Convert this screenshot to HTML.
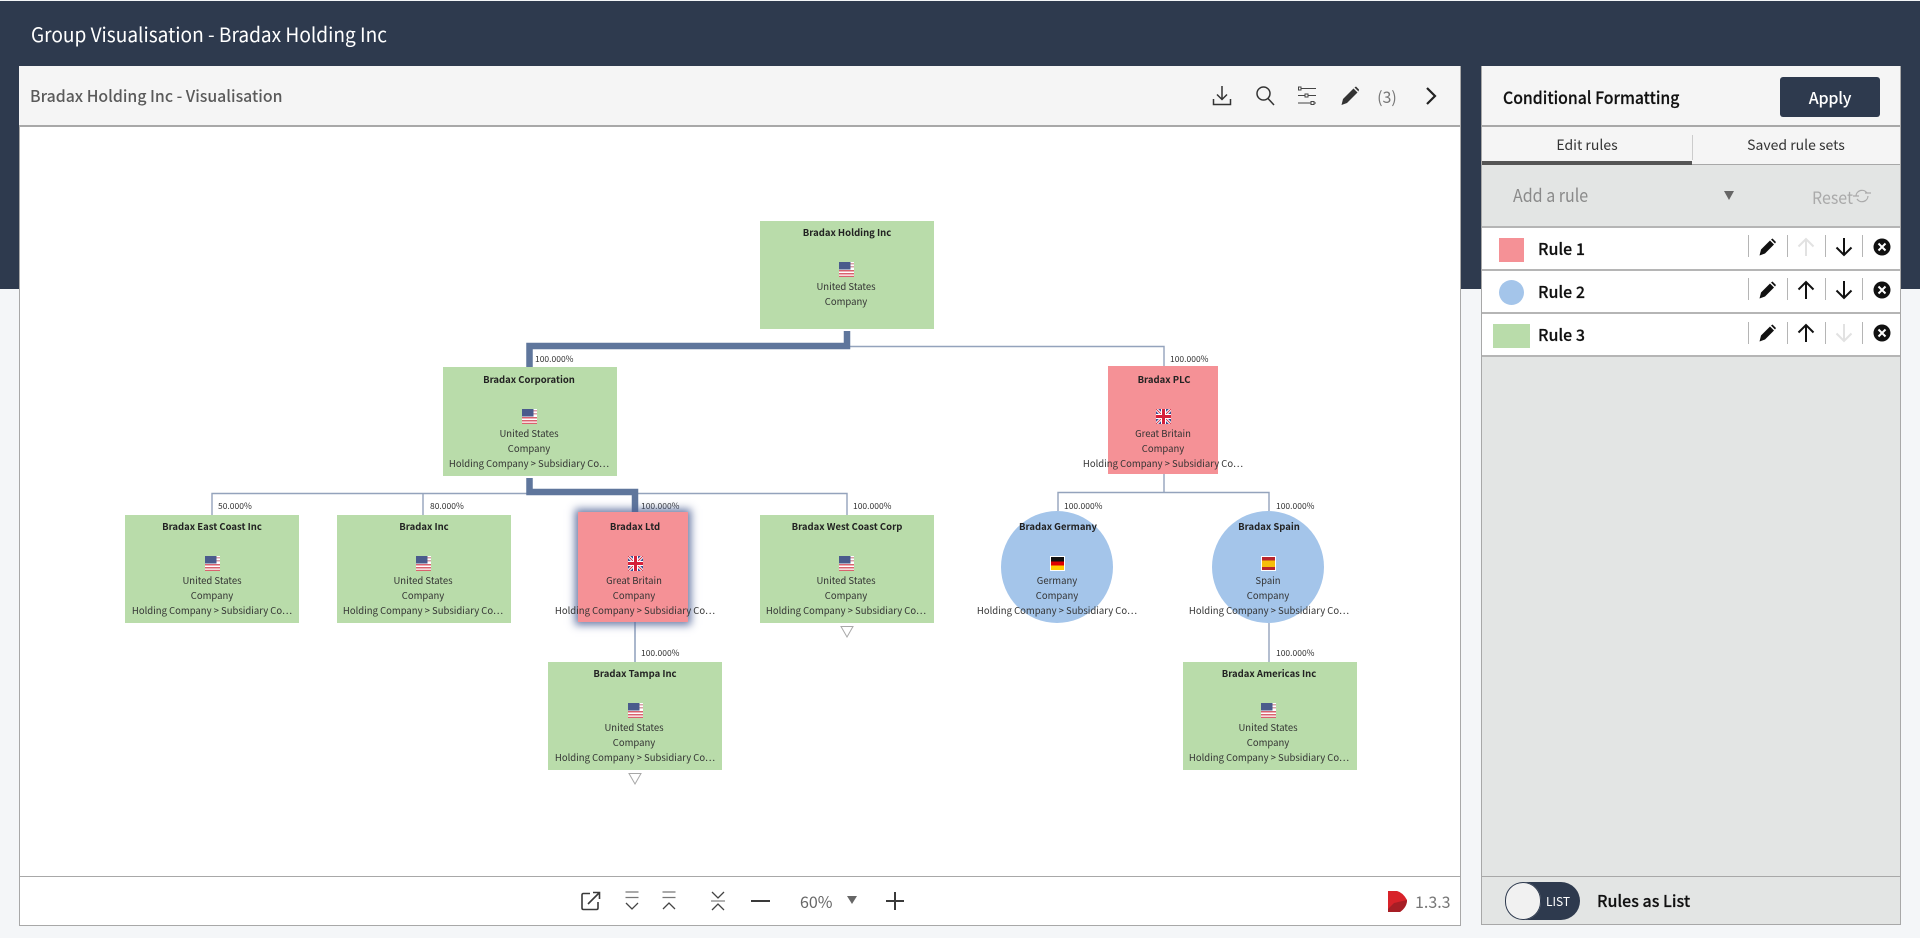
<!DOCTYPE html>
<html lang="en"><head><meta charset="utf-8"><title>Group Visualisation</title>
<style>
html,body{margin:0;padding:0;width:1920px;height:938px;overflow:hidden;background:#f4f6f8}
body{position:relative;font-family:"Noto Sans CJK SC","Liberation Sans",sans-serif;color:#222}
.a{position:absolute;white-space:nowrap;line-height:1}
.c{transform:translateX(-50%)}
.sx{transform-origin:0 50%}
.n{position:absolute;width:174px;height:108px;background:#b9dcaa}
.r{width:110px}
.o{width:112px;height:112px;border-radius:50%;background:#a4c5ea}
.t{position:absolute;white-space:nowrap;transform:translateX(-50%);font-size:9.5px;line-height:12px;color:#333;text-align:center}
.b{font-weight:700;color:#222}
.l{position:absolute;font-size:8.5px;line-height:10px;color:#333;white-space:nowrap}
.sep{position:absolute;width:1px;height:22px;background:#b5b5b5}
.rl{position:absolute;left:1482px;width:418px;height:2px;background:#b5b5b5}
.rt{position:absolute;left:1538px;font-size:16px;line-height:22px;font-weight:500;color:#111;white-space:nowrap;-webkit-text-stroke:.2px #111}
svg{position:absolute;overflow:visible}
</style></head><body>
<div class="a" style="left:0;top:1px;width:1920px;height:288px;background:#2e3a4e"></div>
<div class="a sx" style="left:31px;top:22px;font-size:20px;line-height:23px;color:#fff;transform:scaleX(.954)">Group Visualisation - Bradax Holding Inc</div>

<!-- main panel -->
<div class="a" style="left:19px;top:66px;width:1440px;height:859px;background:#fff;border:1px solid #a8a8a8;box-sizing:content-box;border-top:0;border-bottom:1px solid #a8a8a8;"></div>
<div class="a" style="left:19px;top:66px;width:1441px;height:59px;background:#f5f5f5;border-bottom:2px solid #a8a8a8"></div>
<div class="a sx" style="left:30px;top:85px;font-size:16px;line-height:20px;font-weight:500;color:#5a5a5a;transform:scaleX(.99)">Bradax Holding Inc - Visualisation</div>
<div class="a" style="left:20px;top:876px;width:1440px;height:1px;background:#a8a8a8"></div>

<!-- header icons -->
<svg style="left:1212px;top:85px" width="20" height="22" viewBox="0 0 20 22" fill="none" stroke="#333" stroke-width="1.5"><path d="M10 1V14M5 9.5L10 14.5L15 9.5M1.5 14V19.5H18.5V14"/></svg>
<svg style="left:1255px;top:85px" width="20" height="22" viewBox="0 0 20 22" fill="none" stroke="#333" stroke-width="1.5"><circle cx="8.5" cy="8.5" r="6.5"/><path d="M13 13.5L19 20"/></svg>
<svg style="left:1298px;top:86px" width="18" height="20" viewBox="0 0 18 20" fill="none" stroke="#444" stroke-width="1"><path d="M3 2.5H18M0 9.500H7M10 9.500H18M0 17H13M16 17H18"/><rect x=".5" y="1" width="2.500" height="3" /><rect x="7" y="8" width="3" height="3"/><rect x="13" y="15.500" width="3" height="3"/></svg>
<svg style="left:1341px;top:86px" width="18" height="20" viewBox="0 0 18 20"><path d="M0.500 19L2 13L12.500 2.500L16.500 6.500L6 17Z M13.500 1.500L15 0.500L18 3.500L17.500 5.500Z" fill="#333"/></svg>
<div class="a c" style="left:1387px;top:86px;font-size:16px;line-height:20px;color:#777">(3)</div>
<svg style="left:1425px;top:86px" width="12" height="20" viewBox="0 0 12 20" fill="none" stroke="#222" stroke-width="2.200"><path d="M2 2L10 10L2 18"/></svg>

<!-- graph lines -->
<svg style="left:0;top:0" width="1920" height="938" fill="none">
<g stroke="#94a3bc" stroke-width="1.400">
<path d="M850 346.500H1164V366M1164 474V492.500M1058 511V492.500H1269V511M1269 623V662"/>
<path d="M212 515V493.500H847V515M423 493.500V515"/>
<path d="M635 622V662" stroke="#aab7cc" stroke-width="2"/>
</g>
<path d="M529.500 367V346H847V331" stroke="#5f769c" stroke-width="6.500"/>
<path d="M529.500 478V492H635V512" stroke="#5f769c" stroke-width="6.500"/>
<path d="M841 626.500H853L847 637Z M629 773.500H641L635 784Z" stroke="#a8a8a8" stroke-width="1" fill="#fff"/>
</svg>
<div class="l" style="left:535px;top:354px">100.000%</div>
<div class="l" style="left:1170px;top:354px">100.000%</div>
<div class="l" style="left:218px;top:501px">50.000%</div>
<div class="l" style="left:430px;top:501px">80.000%</div>
<div class="l" style="left:641px;top:501px">100.000%</div>
<div class="l" style="left:853px;top:501px">100.000%</div>
<div class="l" style="left:1064px;top:501px">100.000%</div>
<div class="l" style="left:1276px;top:501px">100.000%</div>
<div class="l" style="left:641px;top:648px">100.000%</div>
<div class="l" style="left:1276px;top:648px">100.000%</div>

<svg width="0" height="0" style="position:absolute"><defs>
<symbol id="us" viewBox="0 0 15 15"><rect width="15" height="15" fill="#fff"/><path d="M0 8H15V9.500H0ZM0 11H15V12.500H0ZM0 13.800H15V15H0Z" fill="#d9626e"/><rect width="11.500" height="7.500" y="0" fill="#4a5b8c"/><rect x="11.500" y="1" width="3.500" height="1.500" fill="#d9a0a8"/><rect x="11.500" y="4" width="3.500" height="1.500" fill="#d9a0a8"/></symbol>
<symbol id="gb" viewBox="0 0 15 15"><rect width="15" height="15" fill="#3c4f91"/><path d="M0 0L15 15M15 0L0 15" stroke="#fff" stroke-width="3"/><path d="M0 0L15 15M15 0L0 15" stroke="#d5384e" stroke-width="1"/><path d="M7.500 0V15M0 7.500H15" stroke="#fff" stroke-width="5"/><path d="M7.500 0V15M0 7.500H15" stroke="#d5203a" stroke-width="3"/></symbol>
<symbol id="de" viewBox="0 0 15 15"><rect width="15" height="15" fill="#fff"/><rect x="1" y="1" width="13" height="4.500" fill="#111"/><rect x="1" y="5.500" width="13" height="4" fill="#d00"/><rect x="1" y="9.500" width="13" height="4.500" fill="#fc0"/></symbol>
<symbol id="es" viewBox="0 0 15 15"><rect width="15" height="15" fill="#fff"/><rect x="1" y="1" width="13" height="13" fill="#b9252c"/><rect x="1" y="4.500" width="13" height="6.500" fill="#f5be0b"/></symbol>
</defs></svg>

<!-- nodes -->
<div class="n" style="left:760px;top:221px"></div>
<div class="t b" style="left:847px;top:226px">Bradax Holding Inc</div>
<svg style="left:839px;top:262px" width="15" height="15"><use href="#us"/></svg>
<div class="t" style="left:846px;top:280px">United States</div>
<div class="t" style="left:846px;top:295px">Company</div>

<div class="n" style="left:443px;top:367px;height:109px"></div>
<div class="t b" style="left:529px;top:373px">Bradax Corporation</div>
<svg style="left:522px;top:409px" width="15" height="15"><use href="#us"/></svg>
<div class="t" style="left:529px;top:427px">United States</div>
<div class="t" style="left:529px;top:442px">Company</div>
<div class="t" style="left:529px;top:457px">Holding Company &gt; Subsidiary Co…</div>

<div class="n r" style="left:1108px;top:366px;background:#f59196"></div>
<div class="t b" style="left:1164px;top:373px">Bradax PLC</div>
<svg style="left:1156px;top:409px" width="15" height="15"><use href="#gb"/></svg>
<div class="t" style="left:1163px;top:427px">Great Britain</div>
<div class="t" style="left:1163px;top:442px">Company</div>
<div class="t" style="left:1163px;top:457px">Holding Company &gt; Subsidiary Co…</div>

<div class="n" style="left:125px;top:515px"></div>
<div class="t b" style="left:212px;top:520px">Bradax East Coast Inc</div>
<svg style="left:205px;top:556px" width="15" height="15"><use href="#us"/></svg>
<div class="t" style="left:212px;top:574px">United States</div>
<div class="t" style="left:212px;top:589px">Company</div>
<div class="t" style="left:212px;top:604px">Holding Company &gt; Subsidiary Co…</div>

<div class="n" style="left:337px;top:515px"></div>
<div class="t b" style="left:424px;top:520px">Bradax Inc</div>
<svg style="left:416px;top:556px" width="15" height="15"><use href="#us"/></svg>
<div class="t" style="left:423px;top:574px">United States</div>
<div class="t" style="left:423px;top:589px">Company</div>
<div class="t" style="left:423px;top:604px">Holding Company &gt; Subsidiary Co…</div>

<div class="n r" style="left:578px;top:512px;height:110px;background:#f59196;box-shadow:0 0 8px 3px rgba(80,100,150,.85)"></div>
<div class="t b" style="left:635px;top:520px">Bradax Ltd</div>
<svg style="left:628px;top:556px" width="15" height="15"><use href="#gb"/></svg>
<div class="t" style="left:634px;top:574px">Great Britain</div>
<div class="t" style="left:634px;top:589px">Company</div>
<div class="t" style="left:635px;top:604px">Holding Company &gt; Subsidiary Co…</div>

<div class="n" style="left:760px;top:515px"></div>
<div class="t b" style="left:847px;top:520px">Bradax West Coast Corp</div>
<svg style="left:839px;top:556px" width="15" height="15"><use href="#us"/></svg>
<div class="t" style="left:846px;top:574px">United States</div>
<div class="t" style="left:846px;top:589px">Company</div>
<div class="t" style="left:846px;top:604px">Holding Company &gt; Subsidiary Co…</div>

<div class="n o" style="left:1001px;top:511px"></div>
<div class="t b" style="left:1058px;top:520px">Bradax Germany</div>
<svg style="left:1050px;top:556px" width="15" height="15"><use href="#de"/></svg>
<div class="t" style="left:1057px;top:574px">Germany</div>
<div class="t" style="left:1057px;top:589px">Company</div>
<div class="t" style="left:1057px;top:604px">Holding Company &gt; Subsidiary Co…</div>

<div class="n o" style="left:1212px;top:511px"></div>
<div class="t b" style="left:1269px;top:520px">Bradax Spain</div>
<svg style="left:1261px;top:556px" width="15" height="15"><use href="#es"/></svg>
<div class="t" style="left:1268px;top:574px">Spain</div>
<div class="t" style="left:1268px;top:589px">Company</div>
<div class="t" style="left:1269px;top:604px">Holding Company &gt; Subsidiary Co…</div>

<div class="n" style="left:548px;top:662px"></div>
<div class="t b" style="left:635px;top:667px">Bradax Tampa Inc</div>
<svg style="left:628px;top:703px" width="15" height="15"><use href="#us"/></svg>
<div class="t" style="left:634px;top:721px">United States</div>
<div class="t" style="left:634px;top:736px">Company</div>
<div class="t" style="left:635px;top:751px">Holding Company &gt; Subsidiary Co…</div>

<div class="n" style="left:1183px;top:662px"></div>
<div class="t b" style="left:1269px;top:667px">Bradax Americas Inc</div>
<svg style="left:1261px;top:703px" width="15" height="15"><use href="#us"/></svg>
<div class="t" style="left:1268px;top:721px">United States</div>
<div class="t" style="left:1268px;top:736px">Company</div>
<div class="t" style="left:1269px;top:751px">Holding Company &gt; Subsidiary Co…</div>

<!-- bottom toolbar -->
<svg style="left:581px;top:891px" width="20" height="20" viewBox="0 0 20 20" fill="none" stroke="#3a3a3a" stroke-width="1.600"><path d="M9 2.500H2.500Q1 2.500 1 4V17Q1 18.500 2.500 18.500H15.500Q17 18.500 17 17V11M7 13L18 2M12 1.500H18.500V8"/></svg>
<svg style="left:624px;top:891px" width="16" height="20" viewBox="0 0 16 20" fill="none" stroke="#444" stroke-width="1.300"><path d="M1.500 1H14.500M1.500 6.500H14.500" stroke="#777"/><path d="M2 12L8 18L14 12"/></svg>
<svg style="left:661px;top:891px" width="16" height="20" viewBox="0 0 16 20" fill="none" stroke="#444" stroke-width="1.300"><path d="M1.500 1H14.500M1.500 6.500H14.500" stroke="#777"/><path d="M2 18L8 12L14 18"/></svg>
<svg style="left:710px;top:891px" width="16" height="20" viewBox="0 0 16 20" fill="none" stroke="#444" stroke-width="1.300"><path d="M2 1L8 7L14 1M2 19L8 13L14 19"/><path d="M1 10H15" stroke="#888"/></svg>
<div class="a" style="left:751px;top:900px;width:19px;height:2px;background:#3a3a3a"></div>
<div class="a" style="left:800px;top:891px;font-size:16px;line-height:20px;color:#666">60%</div>
<svg style="left:847px;top:896px" width="10" height="8"><path d="M0 0H10L5 8Z" fill="#666"/></svg>
<div class="a" style="left:886px;top:900px;width:18px;height:2px;background:#3a3a3a"></div>
<div class="a" style="left:894px;top:892px;width:2px;height:18px;background:#3a3a3a"></div>
<svg style="left:1388px;top:891px" width="19" height="21" viewBox="0 0 19 21"><path d="M0 0H9Q15 1.500 19 9Q19 16 12 21H0Z" fill="#d8232a"/><path d="M6 12L19 9Q19 16 12 21H0V18Z" fill="#a71e25"/></svg>
<div class="a" style="left:1415px;top:891px;font-size:16px;line-height:20px;color:#777">1.3.3</div>

<!-- right panel -->
<div class="a" style="left:1481px;top:66px;width:420px;height:859px;background:#e3e5e4;box-shadow:inset 0 0 0 1px #a8a8a8"></div>
<div class="a" style="left:1482px;top:66px;width:418px;height:59px;background:#f5f5f5;border-bottom:2px solid #a8a8a8"></div>
<div class="a sx" style="left:1503px;top:86px;font-size:17px;line-height:22px;font-weight:500;color:#111;transform:scaleX(.93);-webkit-text-stroke:.2px #111">Conditional Formatting</div>
<div class="a" style="left:1780px;top:77px;width:100px;height:40px;background:#2e3a4e;border-radius:3px;color:#fff;font-size:16px;letter-spacing:-.2px;line-height:40px;text-align:center;font-weight:500">Apply</div>
<div class="a" style="left:1482px;top:127px;width:418px;height:37px;background:#f5f5f5;border-bottom:1px solid #a8a8a8"></div>
<div class="a" style="left:1482px;top:161px;width:210px;height:4px;background:#555"></div>
<div class="a" style="left:1692px;top:135px;width:1px;height:25px;background:#ccc"></div>
<div class="a c" style="left:1587px;top:135px;font-size:14px;line-height:20px;color:#333">Edit rules</div>
<div class="a c" style="left:1796px;top:135px;font-size:14px;line-height:20px;color:#333">Saved rule sets</div>
<div class="a sx" style="left:1513px;top:184px;font-size:18px;line-height:22px;color:#8a8a8a;transform:scaleX(.89)">Add a rule</div>
<svg style="left:1724px;top:191px" width="10" height="9"><path d="M0 0H10L5 9Z" fill="#666"/></svg>
<div class="a sx" style="left:1812px;top:186px;font-size:17px;line-height:21px;color:#aaa;transform:scaleX(.94)">Reset</div>
<svg style="left:1853px;top:188px" width="18" height="16" viewBox="0 0 18 16" fill="none" stroke="#aaa" stroke-width="1.200"><path d="M3 8A6 6 0 0 1 14 5M15 8A6 6 0 0 1 4 11"/><path d="M0 8H6M12 5H18" /></svg>

<div class="a" style="left:1482px;top:227px;width:418px;height:128px;background:#fff"></div>
<div class="rl" style="top:226px"></div>
<div class="rl" style="top:269px"></div>
<div class="rl" style="top:312px"></div>
<div class="rl" style="top:355px"></div>
<div class="a" style="left:1499px;top:238px;width:25px;height:24px;background:#f59196"></div>
<div class="a" style="left:1499px;top:280px;width:25px;height:25px;background:#a4c5ea;border-radius:50%"></div>
<div class="a" style="left:1493px;top:324px;width:37px;height:24px;background:#b9dcaa"></div>
<div class="rt" style="top:237px">Rule 1</div>
<div class="rt" style="top:280px">Rule 2</div>
<div class="rt" style="top:323px">Rule 3</div>

<svg width="0" height="0" style="position:absolute"><defs>
<symbol id="pen" viewBox="0 0 18 18"><path d="M0.500 17.500L2 11.500L11 2.500L15 6.500L6 15.500Z M12 1.500L13.500 0.500L17 4L16 5.500Z" fill="#111"/></symbol>
<symbol id="up" viewBox="0 0 18 20"><path d="M9 19V2M1.500 9.500L9 2L16.500 9.500" fill="none" stroke="currentColor" stroke-width="2"/></symbol>
<symbol id="x" viewBox="0 0 18 18"><circle cx="9" cy="9" r="8.500" fill="#111"/><path d="M5.500 5.500L12.500 12.500M12.500 5.500L5.500 12.500" stroke="#fff" stroke-width="2"/></symbol>
</defs></svg>

<div class="sep" style="left:1748px;top:235px"></div><div class="sep" style="left:1787px;top:235px"></div><div class="sep" style="left:1825px;top:235px"></div><div class="sep" style="left:1862px;top:235px"></div>
<svg style="left:1759px;top:238px" width="18" height="18"><use href="#pen"/></svg>
<svg style="left:1797px;top:237px;color:#e2e2e2" width="18" height="20"><use href="#up"/></svg>
<svg style="left:1835px;top:237px;color:#111;transform:scaleY(-1)" width="18" height="20"><use href="#up"/></svg>
<svg style="left:1873px;top:238px" width="18" height="18"><use href="#x"/></svg>

<div class="sep" style="left:1748px;top:278px"></div><div class="sep" style="left:1787px;top:278px"></div><div class="sep" style="left:1825px;top:278px"></div><div class="sep" style="left:1862px;top:278px"></div>
<svg style="left:1759px;top:281px" width="18" height="18"><use href="#pen"/></svg>
<svg style="left:1797px;top:280px;color:#111" width="18" height="20"><use href="#up"/></svg>
<svg style="left:1835px;top:280px;color:#111;transform:scaleY(-1)" width="18" height="20"><use href="#up"/></svg>
<svg style="left:1873px;top:281px" width="18" height="18"><use href="#x"/></svg>

<div class="sep" style="left:1748px;top:322px"></div><div class="sep" style="left:1787px;top:322px"></div><div class="sep" style="left:1825px;top:322px"></div><div class="sep" style="left:1862px;top:322px"></div>
<svg style="left:1759px;top:324px" width="18" height="18"><use href="#pen"/></svg>
<svg style="left:1797px;top:323px;color:#111" width="18" height="20"><use href="#up"/></svg>
<svg style="left:1835px;top:323px;color:#e2e2e2;transform:scaleY(-1)" width="18" height="20"><use href="#up"/></svg>
<svg style="left:1873px;top:324px" width="18" height="18"><use href="#x"/></svg>

<div class="a" style="left:1482px;top:876px;width:418px;height:1px;background:#a8a8a8"></div>
<div class="a" style="left:1505px;top:882px;width:75px;height:38px;background:#2e3a4e;border-radius:19px"></div>
<div class="a" style="left:1505px;top:882px;width:36px;height:38px;background:#f1f1f1;border-radius:19px;box-shadow:inset 0 0 0 1px #2e3a4e"></div>
<div class="a c" style="left:1558px;top:894px;font-size:12px;line-height:15px;color:#fff">LIST</div>
<div class="rt" style="left:1597px;top:889px">Rules as List</div>
</body></html>
